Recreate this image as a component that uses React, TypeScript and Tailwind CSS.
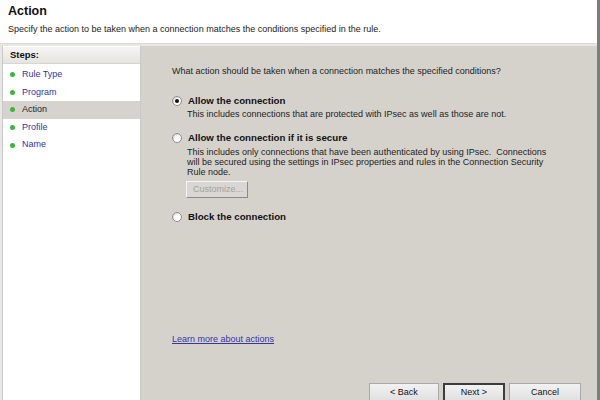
import React from 'react';

const font = { fontFamily: '"Liberation Sans", Arial, sans-serif' };

const steps = [
  { name: 'Rule Type', current: false },
  { name: 'Program', current: false },
  { name: 'Action', current: true },
  { name: 'Profile', current: false },
  { name: 'Name', current: false },
];

const Radio = ({ checked }: { checked?: boolean }) => (
  <span className="w-[10px] h-[10px] rounded-full border border-[#8c8c8c] bg-white flex items-center justify-center shrink-0 shadow-[inset_1px_1px_1px_rgba(0,0,0,0.15)]">
    {checked && <span className="w-[4px] h-[4px] rounded-full bg-[#111]" />}
  </span>
);

const WizardButton = ({ label, primary, width }: { label: string; primary?: boolean; width: string }) => (
  <div
    className={`${width} h-[22px] shrink-0 bg-gradient-to-b from-[#f2f2f2] to-[#dddddd] text-center text-[9px] leading-[11px] text-[#111] ${
      primary ? 'border-2 border-[#3c3c3c] pt-[2px]' : 'border border-[#a9a9a9] pt-[3px]'
    }`}
  >
    {label}
  </div>
);

export default function App() {
  return (
    <div className="w-[600px] h-[400px] flex overflow-hidden bg-[#d5d2cc] text-[#111]" style={font}>
      <div className="flex-1 flex flex-col min-w-0">
        {/* header */}
        <div className="h-[44px] shrink-0 bg-white border-b border-[#dadada] px-[8px] pt-[3px]">
          <div className="text-[12.5px] leading-[16px] font-bold">Action</div>
          <div className="mt-[5px] text-[9px] leading-[11px] text-[#222]">
            Specify the action to be taken when a connection matches the conditions specified in the rule.
          </div>
        </div>

        <div className="flex-1 flex min-h-0 pt-[2px] bg-[#e9e7e3]">
          {/* steps panel */}
          <div className="w-[139px] ml-[2px] shrink-0 bg-white border-x border-[#c9c9c9] flex flex-col">
            <div className="h-[17px] mt-[1px] bg-gradient-to-b from-[#f6f5f3] to-[#e6e4e0] border-b border-[#d8d6d2] pl-[7px] text-[9.5px] leading-[16px] font-bold">
              Steps:
            </div>
            <div className="pt-[2px]">
              {steps.map((s) => (
                <div
                  key={s.name}
                  className={`h-[17.6px] flex items-center pl-[7px] gap-[7px] text-[9px] ${s.current ? 'bg-[#d6d3ce] text-[#222]' : 'text-[#3434a2]'}`}
                >
                  <span className="w-[5px] h-[5px] rounded-full bg-[#3fb53a]" />
                  <span>{s.name}</span>
                </div>
              ))}
            </div>
          </div>

          {/* content */}
          <div className="flex-1 flex flex-col bg-[#d5d2cc] pl-[31px] pt-[20px] text-[9px]">
            <div className="leading-[11px] text-[#222]">
              What action should be taken when a connection matches the specified conditions?
            </div>

            <div className="mt-[18px] flex items-center gap-[6px] leading-[11px] font-bold text-[9.7px]">
              <Radio checked />
              <span>Allow the connection</span>
            </div>
            <div className="ml-[15px] mt-[3px] leading-[10px] text-[#222]">
              This includes connections that are protected with IPsec as well as those are not.
            </div>

            <div className="mt-[13px] flex items-center gap-[6px] leading-[11px] font-bold text-[9.7px]">
              <Radio />
              <span>Allow the connection if it is secure</span>
            </div>
            <div className="ml-[15px] mt-[4px] leading-[10px] text-[#222]">
              This includes only connections that have been authenticated by using IPsec.&nbsp; Connections
              <br />
              will be secured using the settings in IPsec properties and rules in the Connection Security
              <br />
              Rule node.
            </div>
            <div className="ml-[14px] mt-[4px] w-[62px] h-[17px] bg-[#d9d7d3] border border-t-[#f5f5f5] border-l-[#f5f5f5] border-r-[#8a8a8a] border-b-[#8a8a8a] text-[#a3a19d] leading-[15px] pl-[6px]">
              Customize...
            </div>

            <div className="mt-[13px] flex items-center gap-[6px] leading-[11px] font-bold text-[9.7px]">
              <Radio />
              <span>Block the connection</span>
            </div>

            <div className="mt-[112px] leading-[11px] text-[#3535a6] underline">Learn more about actions</div>

            <div className="mt-[38px] flex justify-end gap-[4px] pr-[16px]">
              <WizardButton label="< Back" width="w-[70px]" />
              <WizardButton label="Next >" width="w-[62px]" primary />
              <WizardButton label="Cancel" width="w-[72px]" />
            </div>
          </div>
        </div>
      </div>
      <div className="w-[3px] shrink-0 bg-[#7d7d7d]" />
    </div>
  );
}
